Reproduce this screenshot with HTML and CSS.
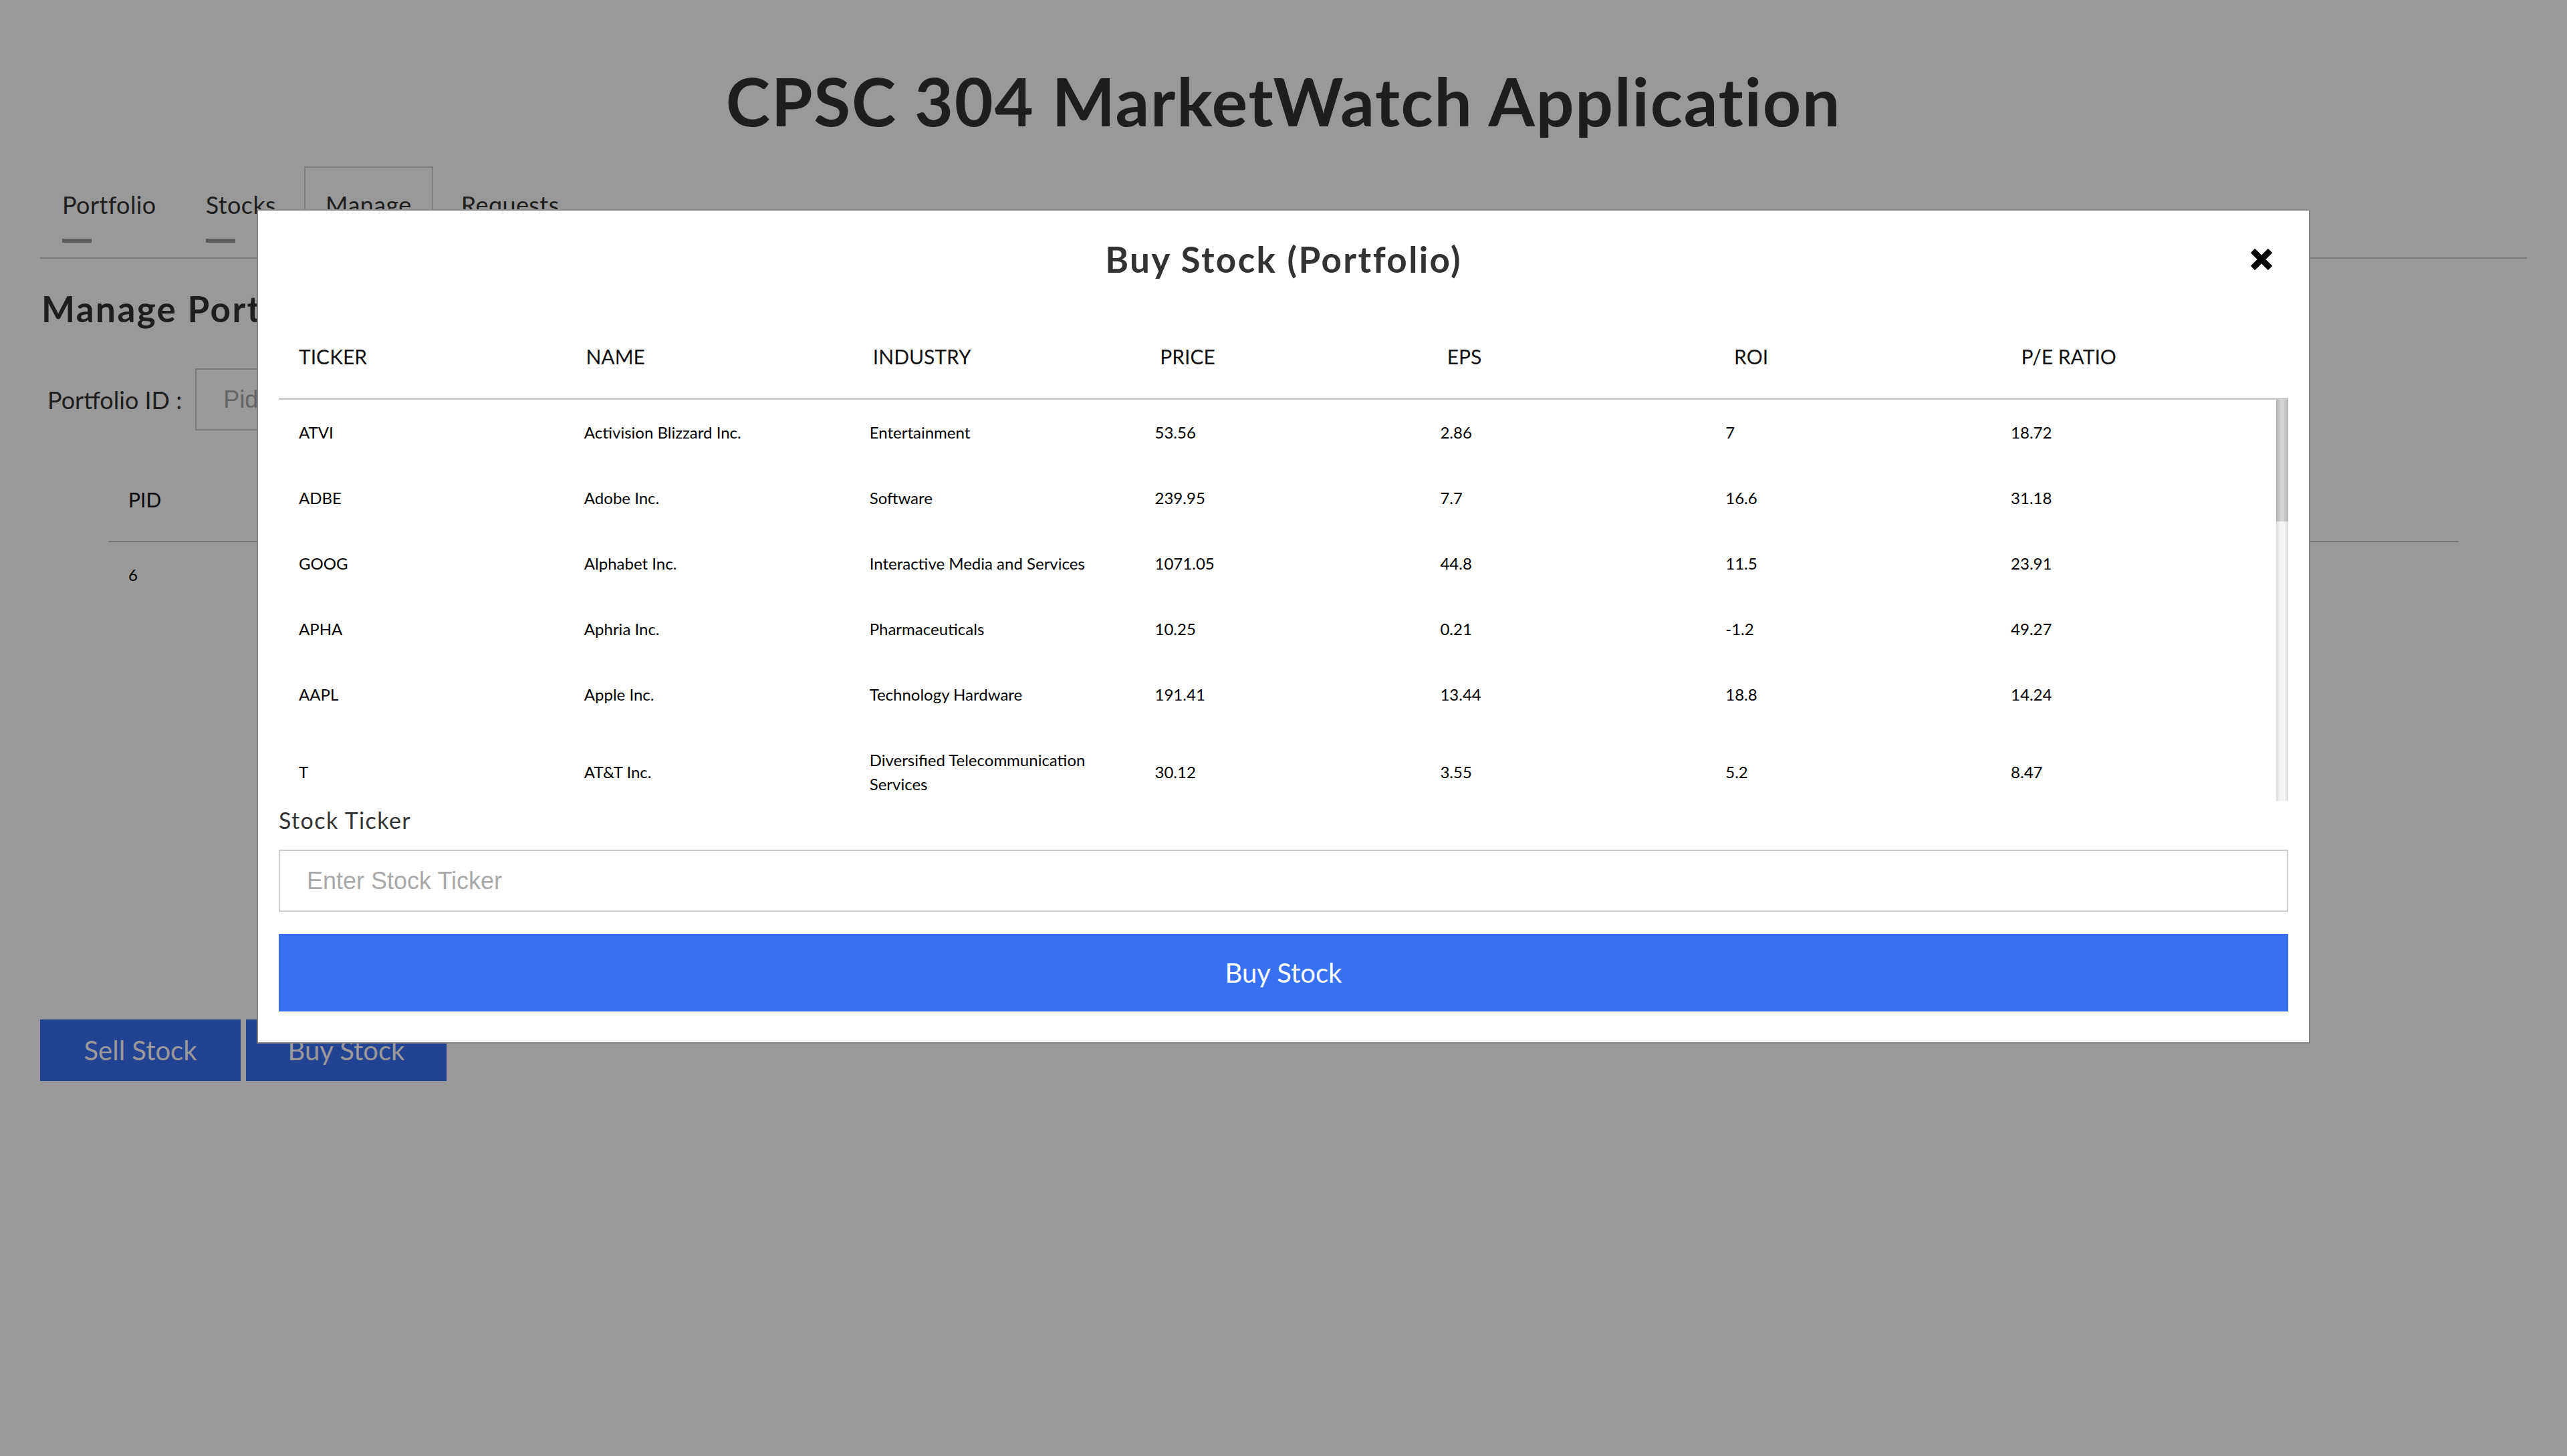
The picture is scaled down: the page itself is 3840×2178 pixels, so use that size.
FILE: index.html
```html
<!DOCTYPE html>
<html lang="en">
<head>
<meta charset="utf-8">
<title>CPSC 304 MarketWatch Application</title>
<link rel="stylesheet" href="styles.css">
</head>
<body>
<div class="page">
  <h1 class="app-title">CPSC 304 MarketWatch Application</h1>
  <nav class="tabs">
    <div class="tab"><span class="tab-label">Portfolio</span><span class="tab-bar"></span></div>
    <div class="tab"><span class="tab-label">Stocks</span><span class="tab-bar"></span></div>
    <div class="tab active"><span class="tab-label">Manage</span><span class="tab-bar none"></span></div>
    <div class="tab"><span class="tab-label">Requests</span><span class="tab-bar"></span></div>
  </nav>
  <section class="manage">
    <h2 class="section-title">Manage Portfolio</h2>
    <div class="pid-row">
      <label class="pid-label">Portfolio ID :</label>
      <input class="pid-input" type="text" placeholder="Pid">
    </div>
    <table class="pid-table">
      <thead><tr><th>PID</th><th>NAME</th></tr></thead>
      <tbody><tr><td>6</td><td>Portfolio</td></tr></tbody>
    </table>
    <div class="actions">
      <button class="action-btn">Sell Stock</button>
      <button class="action-btn">Buy Stock</button>
    </div>
  </section>
</div>

<div class="overlay">
  <div class="modal">
    <div class="modal-header">
      <h2 class="modal-title">Buy Stock (Portfolio)</h2>
      <svg class="close" viewBox="0 0 34 34" aria-label="close"><path d="M4 4 L30 30 M30 4 L4 30" stroke="#000" stroke-width="9" fill="none"/></svg>
    </div>
    <table class="stock-table stock-head">
      <thead><tr><th>TICKER</th><th>NAME</th><th>INDUSTRY</th><th>PRICE</th><th>EPS</th><th>ROI</th><th>P/E RATIO</th></tr></thead>
    </table>
    <div class="stock-scroll">
      <div class="stock-viewport">
        <table class="stock-table stock-body">
          <tbody>
            <tr><td>ATVI</td><td>Activision Blizzard Inc.</td><td>Entertainment</td><td>53.56</td><td>2.86</td><td>7</td><td>18.72</td></tr>
            <tr><td>ADBE</td><td>Adobe Inc.</td><td>Software</td><td>239.95</td><td>7.7</td><td>16.6</td><td>31.18</td></tr>
            <tr><td>GOOG</td><td>Alphabet Inc.</td><td>Interactive Media and Services</td><td>1071.05</td><td>44.8</td><td>11.5</td><td>23.91</td></tr>
            <tr><td>APHA</td><td>Aphria Inc.</td><td>Pharmaceuticals</td><td>10.25</td><td>0.21</td><td>-1.2</td><td>49.27</td></tr>
            <tr><td>AAPL</td><td>Apple Inc.</td><td>Technology Hardware</td><td>191.41</td><td>13.44</td><td>18.8</td><td>14.24</td></tr>
            <tr><td>T</td><td>AT&amp;T Inc.</td><td>Diversified Telecommunication Services</td><td>30.12</td><td>3.55</td><td>5.2</td><td>8.47</td></tr>
            <tr><td>BAC</td><td>Bank of America Corp.</td><td>Banks</td><td>30.53</td><td>2.61</td><td>10.9</td><td>11.7</td></tr>
            <tr><td>BB</td><td>BlackBerry Ltd.</td><td>Software</td><td>7.84</td><td>0.17</td><td>-2.3</td><td>46.12</td></tr>
            <tr><td>CGC</td><td>Canopy Growth Corp.</td><td>Pharmaceuticals</td><td>41.2</td><td>-1.6</td><td>-8.4</td><td>-25.75</td></tr>
            <tr><td>KO</td><td>Coca-Cola Co.</td><td>Beverages</td><td>50.27</td><td>1.5</td><td>9.8</td><td>33.51</td></tr>
            <tr><td>FB</td><td>Facebook Inc.</td><td>Interactive Media and Services</td><td>189.3</td><td>7.57</td><td>27.9</td><td>25.01</td></tr>
            <tr><td>F</td><td>Ford Motor Co.</td><td>Automobiles</td><td>9.83</td><td>0.9</td><td>2.1</td><td>10.92</td></tr>
            <tr><td>INTC</td><td>Intel Corp.</td><td>Semiconductors</td><td>46.58</td><td>4.48</td><td>23.5</td><td>10.4</td></tr>
            <tr><td>JNJ</td><td>Johnson &amp; Johnson</td><td>Pharmaceuticals</td><td>139.1</td><td>5.61</td><td>25.6</td><td>24.8</td></tr>
            <tr><td>MSFT</td><td>Microsoft Corp.</td><td>Software</td><td>135.68</td><td>4.75</td><td>16.4</td><td>28.56</td></tr>
            <tr><td>NFLX</td><td>Netflix Inc.</td><td>Entertainment</td><td>367.72</td><td>2.68</td><td>23.1</td><td>137.2</td></tr>
            <tr><td>NKE</td><td>Nike Inc.</td><td>Apparel</td><td>85.04</td><td>2.49</td><td>29.7</td><td>34.15</td></tr>
            <tr><td>NVDA</td><td>NVIDIA Corp.</td><td>Semiconductors</td><td>161.37</td><td>6.63</td><td>38.3</td><td>24.34</td></tr>
            <tr><td>SHOP</td><td>Shopify Inc.</td><td>Software</td><td>301.03</td><td>-0.59</td><td>-1.5</td><td>-510.2</td></tr>
            <tr><td>TSLA</td><td>Tesla Inc.</td><td>Automobiles</td><td>224.4</td><td>-5.72</td><td>-16.2</td><td>-39.23</td></tr>
          </tbody>
        </table>
      </div>
      <div class="scrollbar"><div class="scroll-thumb"></div></div>
    </div>
    <label class="ticker-label" for="ticker">Stock Ticker</label>
    <input class="ticker-input" id="ticker" type="text" placeholder="Enter Stock Ticker">
    <button class="buy-btn">Buy Stock</button>
  </div>
</div>
</body>
</html>
```

FILE: styles.css
```css
html, body {
  margin: 0;
  padding: 0;
  background: #ffffff;
  font-family: Lato, "Open Sans", sans-serif;
  color: #333333;
}

.page {
  padding: 90px 60px 0;
}

.app-title {
  margin: 0;
  text-align: center;
  font-size: 100px;
  line-height: 120px;
  font-weight: 700;
  letter-spacing: 1.8px;
  color: #333333;
}

.tabs {
  display: flex;
  gap: 10px;
  margin-top: 39px;
  border-bottom: 2px solid #cccccc;
  padding-left: 1px;
}

.tab {
  display: flex;
  flex-direction: column;
  align-items: flex-start;
  padding: 35px 32px 22px;
  font-size: 36px;
  line-height: 44px;
  letter-spacing: 0.4px;
  color: #333333;
}

.tab-bar {
  width: 44px;
  height: 6px;
  margin-top: 29px;
  background: #999999;
}

.tab-bar.none {
  background: transparent;
}

.tab.active {
  border: 2px solid #d2d2d2;
  border-bottom-color: #ffffff;
  background: #ffffff;
  padding: 33px 30px 22px;
  margin-bottom: -2px;
}

.section-title {
  margin: 43px 0 0 2px;
  font-size: 53px;
  line-height: 64px;
  font-weight: 700;
  letter-spacing: 2.4px;
  color: #333333;
}

.pid-row {
  display: flex;
  align-items: center;
  margin-top: 57px;
}

.pid-label {
  margin-left: 11px;
  margin-right: 20px;
  font-size: 36px;
  color: #333333;
}

.pid-input {
  box-sizing: border-box;
  width: 700px;
  height: 93px;
  border: 2px solid #cccccc;
  padding: 0 40px;
  font-family: "Liberation Sans", Arial, sans-serif;
  font-size: 36px;
  outline: none;
}

.pid-input::placeholder,
.ticker-input::placeholder {
  color: #a9a9a9;
}

.pid-table {
  width: calc(100% - 204px);
  margin: 41px auto 0;
  border-collapse: collapse;
}

.pid-table th {
  text-align: left;
  font-weight: 400;
  font-size: 30px;
  line-height: 36px;
  padding: 44px 30px;
  border-bottom: 2px solid #c8c8c8;
  color: #111111;
}

.pid-table td {
  font-size: 24px;
  line-height: 36px;
  padding: 31px 30px;
  color: #000000;
}

.actions {
  display: flex;
  gap: 8px;
  margin-top: 616px;
}

.action-btn {
  width: 300px;
  height: 92px;
  border: 0;
  background: #3870f4;
  color: #ffffff;
  font-family: Lato, "Open Sans", sans-serif;
  font-size: 40px;
}

.overlay {
  position: fixed;
  inset: 0;
  background: rgba(0, 0, 0, 0.4);
  padding-top: 313px;
}

.modal {
  box-sizing: border-box;
  width: 80%;
  margin: 0 auto;
  background: #ffffff;
  border: 2px solid #888888;
  padding: 41px 31px 46px;
}

.modal-header {
  display: grid;
  grid-template-columns: 1fr auto 1fr;
  align-items: center;
}

.modal-title {
  grid-column: 2;
  margin: 0;
  font-size: 53px;
  line-height: 64px;
  font-weight: 700;
  letter-spacing: 2.4px;
  color: #333333;
}

.close {
  grid-column: 3;
  justify-self: end;
  width: 34px;
  height: 34px;
  margin-right: 23px;
}

.stock-table {
  width: 100%;
  table-layout: fixed;
  border-collapse: collapse;
}

.stock-head {
  margin-top: 51px;
  border-bottom: 3px solid #cccccc;
}

.stock-head th {
  text-align: left;
  font-weight: 400;
  font-size: 30px;
  line-height: 36px;
  padding: 44px 30px;
  color: #111111;
}

.stock-scroll {
  display: flex;
  height: 600px;
}

.stock-viewport {
  flex: 1;
  overflow: hidden;
}

.scrollbar {
  width: 18px;
  flex: none;
  background: linear-gradient(to right, #d9d9d9, #f3f3f3 30%, #f3f3f3 70%, #d9d9d9);
}

.scroll-thumb {
  height: 182px;
  background: linear-gradient(to right, #b0b0b0, #d4d4d4 40%, #d4d4d4 60%, #b0b0b0);
}

.stock-body td {
  font-size: 24px;
  line-height: 36px;
  padding: 31px 30px;
  color: #000000;
  vertical-align: middle;
}

.ticker-label {
  display: block;
  margin-top: 8px;
  font-size: 34px;
  line-height: 41px;
  letter-spacing: 1.4px;
  color: #333333;
}

.ticker-input {
  display: block;
  box-sizing: border-box;
  width: 100%;
  height: 93px;
  margin-top: 24px;
  border: 2px solid #cccccc;
  padding: 0 40px;
  font-family: "Liberation Sans", Arial, sans-serif;
  font-size: 36px;
  outline: none;
}

.buy-btn {
  display: block;
  width: 100%;
  height: 116px;
  margin-top: 33px;
  border: 0;
  background: #3870f4;
  color: #ffffff;
  font-family: Lato, "Open Sans", sans-serif;
  font-size: 40px;
}
```
